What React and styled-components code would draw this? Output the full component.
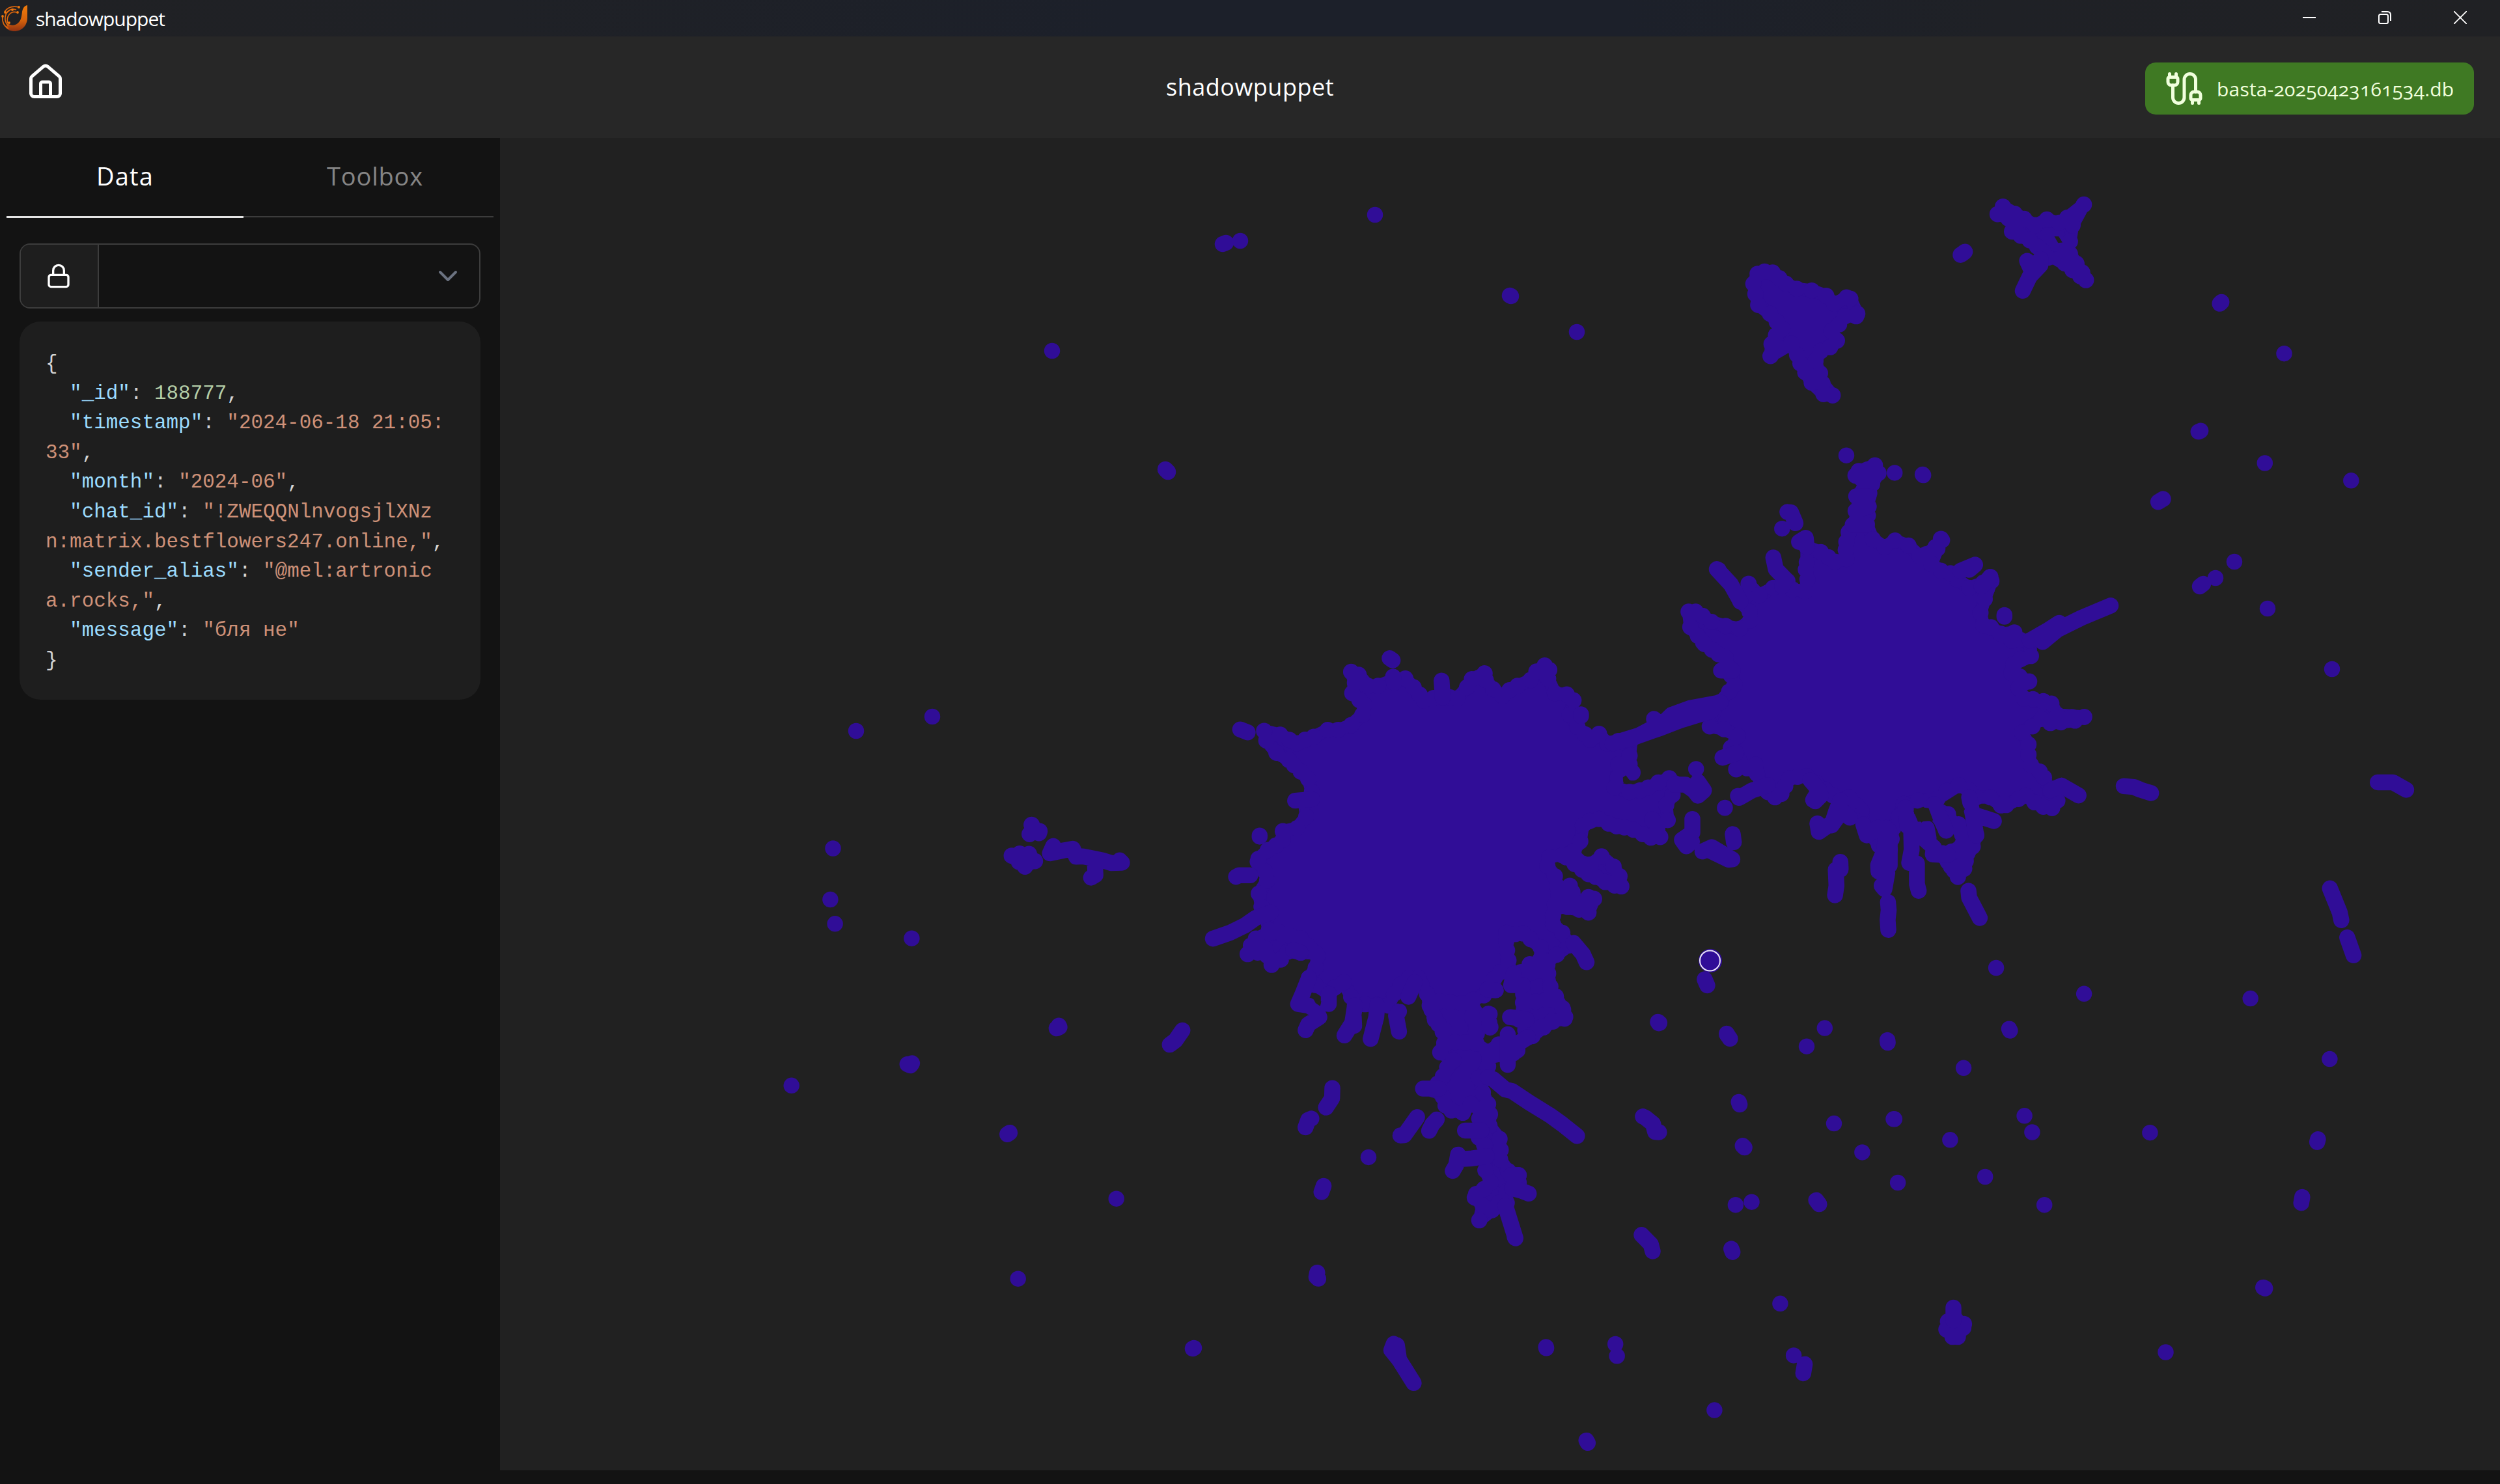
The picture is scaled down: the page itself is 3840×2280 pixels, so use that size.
import React from "react";
import styled, { createGlobalStyle } from "styled-components";
import { Cable, ChevronDown, House, Lock } from "lucide-react";

const GlobalStyle = createGlobalStyle`
  * { box-sizing: border-box; }
  html, body { margin: 0; background: #131313; }
  body { width: 3840px; height: 2280px; overflow: hidden; font-family: "Open Sans", "Noto Sans", sans-serif; color: #fff; }
`;

const Window = styled.div`
  width: 3840px;
  height: 2280px;
  display: flex;
  flex-direction: column;
  background: #131313;
`;
const TitleBar = styled.div`
  height: 56px;
  flex: none;
  display: flex;
  align-items: center;
  justify-content: space-between;
  background: linear-gradient(90deg, #202124 0%, #1f2126 20%, #1c202a 45%, #1c202a 65%, #1f2126 80%, #202124 100%);
`;
const Brand = styled.div`
  display: flex;
  align-items: center;
  gap: 12px;
  padding-left: 1px;
`;
const BrandName = styled.span`
  font-size: 30px;
  line-height: 56px;
  letter-spacing: -1px;
  padding-top: 2px;
`;
const WindowControls = styled.div`
  display: flex;
  height: 56px;
`;
const ControlButton = styled.div`
  width: 116px;
  display: flex;
  align-items: center;
  justify-content: center;
  padding-right: 6px;
  padding-bottom: 2px;
`;
const Header = styled.header`
  height: 156px;
  flex: none;
  display: grid;
  grid-template-columns: 1fr auto 1fr;
  align-items: center;
  padding: 0 40px;
  background: #272727;
`;
const HomeLink = styled.div`
  display: flex;
  padding-bottom: 16px;
`;
const PageTitle = styled.h1`
  margin: 0;
  font-size: 36px;
  font-weight: 400;
  line-height: 48px;
  letter-spacing: 0.5px;
`;
const DatabaseButton = styled.div`
  justify-self: end;
  width: 505px;
  height: 80px;
  margin-top: 4px;
  display: flex;
  align-items: center;
  gap: 20px;
  padding: 0 30px;
  border-radius: 16px;
  background: #3f7923;
  color: #f1ffdd;
  font-size: 30px;
  white-space: nowrap;
  font-feature-settings: "onum" 1;

  svg { flex: none; }
`;
const DatabaseName = styled.span`
  letter-spacing: 0.2px;
`;
const Body = styled.div`
  flex: 1;
  display: flex;
  min-height: 0;
`;
const Sidebar = styled.aside`
  width: 768px;
  flex: none;
  display: flex;
  flex-direction: column;
  padding: 0 10px;
`;
const Tabs = styled.div`
  display: flex;
  height: 123px;
  margin-bottom: 39px;
`;
const Tab = styled.div`
  flex: ${(p) => (p.$active ? "0 0 364px" : "1")};
  height: ${(p) => (p.$active ? 123 : 122)}px;
  padding-bottom: 4px;
  padding-left: ${(p) => (p.$active ? 0 : 20)}px;
  display: flex;
  align-items: center;
  justify-content: center;
  font-size: 38px;
  letter-spacing: ${(p) => (p.$active ? 1.2 : 0.8)}px;
  color: ${(p) => (p.$active ? "#fff" : "#858585")};
  border-bottom: ${(p) => (p.$active ? "3px solid #e4e4e4" : "2px solid #3c3c3c")};
`;
const Picker = styled.div`
  height: 100px;
  margin: 0 20px 20px;
  display: flex;
  border: 2px solid #3d3d3d;
  border-radius: 16px;
  overflow: hidden;
`;
const LockCell = styled.div`
  width: 120px;
  display: flex;
  align-items: center;
  justify-content: center;
  padding-right: 2px;
  background: #1e1e1e;
  border-right: 2px solid #3d3d3d;
`;
const PickerValue = styled.div`
  flex: 1;
  display: flex;
  align-items: center;
  justify-content: flex-end;
  padding-right: 24px;
  color: #6b7280;
`;
const Record = styled.div`
  margin: 0 20px;
  height: 581px;
  padding: 42px 40px 38px;
  border-radius: 32px;
  background: #1e1e1e;
  color: #d4d4d4;
  font-family: "Liberation Mono", monospace;
  font-size: 30.93px;
`;
const CodeLine = styled.div`
  display: flex;
  height: 45.6px;
  line-height: 45.6px;
  padding-left: ${(p) => (p.$indent ? 37.1 : 0)}px;
  white-space: pre;
`;
const Key = styled.span`
  color: #9cdcfe;
`;
const Str = styled.span`
  color: #ce9178;
`;
const Num = styled.span`
  color: #b5cea8;
`;
const MapPanel = styled.main`
  flex: 1;
  height: 2047px;
  background: #212121;
`;

/* Points are stored per tile, on a 1568-unit grid stretched over the tile. */
const GRID = 1568;
const tiles = [
  {
    box: [2550, 260, 1290, 600],
    areas: [
      "195,411 182,420 174,460 183,545 205,580 228,640 208,702 206,750 245,700 262,780 283,857 305,903 322,908 303,860 290,770 300,730 330,688 320,650 345,590 366,590 368,580 355,520 348,515 325,540 310,508 283,487 255,480 235,460 210,415",
      "640,150 630,180 668,210 657,250 690,285 715,330 724,355 745,360 770,405 795,445 788,415 765,340 760,320 765,290 770,225 791,142 760,195 745,215 722,202 700,225",
    ],
    lines: [
      "710,360 710,385 690,430 677,488", "685,368 692,400", "569,331 564,340 561,344", "1048,533 1045,540", "1165,740",
      "1009,1050 1005,1054", "1129,1180", "1290,1250", "939,1324 930,1336",
    ],
    holes: ["736,270 744,270 751,294 743,296"],
  },
  {
    box: [2450, 660, 850, 820],
    areas: [
      "712,330 732,280 745,240 745,196 765,160 738,135 747,122 793,105 803,128 785,160 777,187 775,226 770,278 787,322 820,345 850,326 888,341 920,372 938,366 965,345 980,321 983,325 970,350 953,395 980,415 1007,422 1025,440 1060,465 1100,450 1120,433 1123,445 1104,498 1092,538 1100,575 1122,581 1150,600 1188,596 1180,620 1232,620 1235,665 1185,690 1180,715 1230,740 1200,760 1215,790 1270,798 1293,805 1310,838 1386,844 1360,855 1320,860 1290,862 1265,850 1210,890 1228,925 1228,955 1235,985 1260,1005 1272,1022 1290,1065 1310,1090 1295,1112 1270,1108 1245,1095 1220,1075 1200,1085 1165,1103 1150,1104 1120,1080 1080,1080 1060,1060 1030,1045 970,1085 915,1090 875,1100 845,1170 835,1235 820,1245 765,1165 755,1120 720,1080 695,1090 600,1018 550,1025 528,1070 510,1080 490,1065 470,1045 455,985 400,998 410,975 385,935 405,900 365,880 325,872 335,830 355,800 380,770 395,750 370,670 350,660 310,630 306,625 270,580 265,535 285,535 330,565 370,577 410,585 440,560 438,535 412,505 425,490 435,453 465,487 505,465 545,445 560,470 595,475 602,440 600,390 600,345 640,360 680,388 712,380",
      "965,1110 995,1178 1030,1160 1045,1190 1080,1192 1070,1225 1046,1270 1040,1292 1028,1314 1000,1270 985,1245 1010,1240 1040,1220 1040,1190 1020,1165 1000,1130",
      "1030,1235 1050,1240 1046,1290 1028,1314 990,1255",
    ],
    lines: [
      "355,802 270,818 217,838 195,860 125,898 50,922", "50,922 125,898 185,877 240,855 330,826", "740,196 775,196", "738,239 775,226", "730,280 770,280",
      "712,76", "849,127", "928,132 930,134", "412,505 385,455 345,410 350,412", "505,376 507,385 512,410 540,440 530,460",
      "578,330 597,318 600,345", "545,242 555,243 568,275", "530,291", "1035,415 1077,397 1060,412", "1160,545 1160,550",
      "1120,433 1095,460", "1232,620 1285,588 1315,568 1310,588 1378,553 1461,517", "1268,624 1310,588", "1322,1046 1370,1075", "1290,1060 1322,1046",
      "390,708 357,708", "167,850 180,862", "361,964 400,950", "405,1076 408,1082 445,1060 490,1045", "610,1030 635,1060 618,1088 624,1092 640,1075",
      "695,1090 682,1125 670,1163 700,1120 722,1140", "630,1157 634,1182 660,1163", "760,1160 770,1192 800,1170", "825,1170 820,1235 802,1280 803,1298 828,1302 820,1350 812,1340",
      "835,1180 835,1280", "830,1388 832,1412 829,1440 831,1470", "895,1150 897,1235 890,1273 912,1275 912,1335 917,1355",
      "900,1160 935,1205 960,1228 957,1248 1000,1250", "940,1172 945,1200", "880,1110 885,1165", "960,1100 995,1178", "1060,1080 1070,1130 1130,1150", "1070,1130 1080,1192",
      "695,1270 696,1292 682,1293 684,1340 680,1368", "1058,1355 1060,1375 1090,1435", "368,1111",
    ],
    holes: ["902,1120 925,1110 945,1112 958,1148 940,1150 915,1152", "1032,1110 1040,1102 1048,1115 1044,1122", "735,1108 750,1128 740,1115"],
  },
  {
    box: [1820, 960, 900, 700],
    areas: [
      "212,365 255,378 300,408 345,385 382,362 410,362 445,345 475,310 480,275 448,235 455,200 445,162 465,172 490,210 517,210 557,190 590,185 612,215 640,260 665,252 687,240 710,250 730,252 755,215 768,187 802,167 805,190 825,222 850,245 890,210 925,190 963,140 975,155 972,185 990,235 1022,240 1040,260 1030,310 1050,350 1085,395 1108,375 1130,408 1160,400 1195,395 1190,450 1190,480 1198,508 1160,480 1150,560 1190,575 1240,560 1296,528 1310,545 1305,585 1288,620 1292,672 1250,670 1272,730 1247,732 1225,720 1200,705 1155,693 1108,668 1065,690 1058,745 1040,780 975,800 970,830 990,865 1000,930 985,1000 985,1030 1010,1060 1028,1103 995,1135 970,1160 968,1195 950,1190 900,1195 952,1150 952,1110 905,1062 860,1060 862,1120 870,1190 845,1195 800,1275 770,1290 775,1330 780,1440 700,1440 690,1400 668,1350 655,1310 648,1270 625,1215 600,1215 560,1270 545,1310 455,1310 445,1280 425,1230 385,1270 350,1240 332,1215 350,1180 355,1140 310,1080 225,1050 215,1000 205,970 198,925 220,880 215,850 195,815 197,805 222,775 262,740 262,710 300,700 325,660 320,610 340,575 330,530 310,505 278,465 245,440 218,398",
      "190,1080 225,1060 260,1065 310,1080 350,1130 310,1128 275,1125 232,1170 215,1115 168,1133",
      "1020,800 1050,810 1085,825 1115,797 1147,832 1163,865 1168,900 1125,885 1080,858",
      "1000,910 1030,898 1037,920 1055,960 1080,937 1095,943 1080,990 1055,980 1000,970",
      "970,1170 972,1200 978,1245 988,1290 1012,1325 1016,1355 985,1365 960,1385 930,1415 920,1380 900,1355 905,1300 905,1240 880,1215",
    ],
    lines: [
      "148,360 168,370", "548,115 556,122", "557,178 560,200", "687,192 690,250", "1060,308 1060,314", "1195,390 1250,365", "295,605 340,600",
      "200,725 200,729", "137,867 145,862 175,862", "75,1080 120,1060 160,1035 190,1008 230,990", "1040,1095 1065,1133 1075,1161",
      "1368,496", "1373,540 1389,570 1373,588 1362,570 1340,550 1310,550", "1445,630", "1358,668 1358,715 1330,740 1342,762 1357,745", "1385,780 1410,765 1465,807 1455,808 1410,780", "1466,720 1469,748",
      "1391,1220 1398,1241", "1267,1367 1268,1371", "1450,1407 1458,1424", "832,1258 810,1255", "812,1338 808,1345", "818,1384", "880,1200 873,1240 905,1240",
      "615,1230 598,1280", "573,1330 565,1345 573,1400", "515,1310 512,1350 497,1425", "455,1310 448,1370 427,1413", "452,1350 453,1380",
      "332,1215 315,1270 303,1305 330,1310 350,1325 360,1350 330,1375 323,1395", "385,1270 385,1305", "870,1350 900,1355", "290,1120 310,1128",
    ],
    holes: ["572,1290 582,1305 572,1305", "1172,525 1180,518 1192,538 1182,548 1173,542", "345,1290 365,1296 362,1312 350,1302"],
  },
  {
    box: [1180, 1180, 800, 800],
    areas: ["793,171 787,199 815,196 817,190", "733,264 757,258 785,259 803,280 773,297"],
    lines: [
      "195,242", "187,396", "201,469", "432,513", "70,956", "875,776 877,780 868,784", "433,889 428,896 419,892", "727,1098 720,1103", "1048,1297",
      "752,1538", "1247,790 1226,820 1209,833", "858,235 848,257 890,248 917,243 927,267 947,266 977,272 1010,279 1032,286 1065,285 1058,278", "983,275 985,322 972,330",
    ],
  },
  {
    box: [1900, 1540, 640, 700],
    areas: [
      "728,0 745,60 780,95 780,140 765,172 815,200 775,255 755,280 740,300 775,325 785,355 807,372 850,380 880,350 915,370 912,400 910,465 930,490 940,530 935,578 955,620 900,660 895,672 925,700 912,750 960,715 985,690 1015,690 1015,650 1035,640 1060,620 1060,595 1020,580 990,540 988,470 950,425 952,385 945,350 925,310 910,260 945,220 945,170 895,140 900,100 885,50 880,0",
      "1080,0 1085,95 1095,120 1145,85 1185,65 1232,55 1235,50 1225,20 1200,-20",
      "945,170 985,145 1019,130 1060,140 1055,165 1040,175 1000,180 950,190",
    ],
    lines: [
      "700,297 760,297", "1010,700 1048,812 1045,808", "1035,640 1070,648 1098,658", "951,40", "952,87 950,70", "1019,110 1019,215", "1062,60 1090,60",
      "945,258 965,265 1010,300 1035,305 1100,345 1180,390 1225,420 1280,460", "858,441 920,441", "832,524 825,560 812,580", "832,540 885,537 940,530",
      "1060,595 1030,595", "678,395 630,457 615,458", "752,403 735,420 723,442", "280,400 268,405 258,430", "359,295 358,330 335,362", "495,533", "326,632 318,653",
      "302,930 299,945 306,951", "590,1175 581,1197 610,1230 665,1310", "602,1180 610,1230", "1163,1186 1164,1190", "1424,1176", "1430,1217", "1315,1508 1320,1516",
      "1060,140 1095,120",
    ],
  },
  {
    box: [2480, 1400, 740, 880],
    areas: ["1085,1123 1080,1145 1100,1165 1117,1165 1135,1140 1137,1130 1110,1118"],
    lines: [
      "141,303 146,306", "365,337 376,349", "684,320", "625,370", "888,353 889,360", "1242,155", "1528,226", "1284,322 1287,327", "1136,429", "404,522 407,529",
      "714,581", "908,569 911,569", "1334,560", "1359,605", "1092,626", "806,660", "417,642 423,647", "922,743", "1206,727", "1399,804", "446,796", "394,804", "656,791 666,802",
      "380,924 384,933", "539,1074", "583,1216", "619,1240 614,1265", "325,1366", "1103,1085 1103,1120", "92,562 100,565 125,582 132,604 145,605", "88,886 118,912 124,931",
    ],
  },
  {
    box: [3200, 1150, 640, 1130],
    areas: [],
    lines: [
      "152,80 190,82 215,88 255,95", "1108,72 1165,72 1215,88", "928,298 965,350 971,366", "993,403 1017,441", "629,533", "927,662", "251,819", "883,833 880,839",
      "824,956 820,969", "677,1149 684,1151", "310,1287",
    ],
  },
];
/* Outlying points, already in window coordinates. */
const outliers = [
  [[2112, 330]], [[1878, 375], [1883, 373]], [[1905, 370]], [[2319, 454], [2321, 455]], [[2422, 510]], [[1616, 539]], [[1790, 721], [1794, 725]], [[1315, 1123]], [[1432, 1101]],
  [[3432, 863]], [[3379, 901], [3384, 897]], [[3403, 888]], [[3483, 935]], [[3582, 1028]], [[1832, 2072], [1834, 2071]],
];

const MAP_X = 768;
const MAP_Y = 212;
const place = ([x, y, w, h], text) =>
  text.split(" ").map((pair) => {
    const [px, py] = pair.split(",").map(Number);
    return [x + (px * w) / GRID - MAP_X, y + (py * h) / GRID - MAP_Y];
  });
const toPath = (pts, close) =>
  "M" + pts.map(([x, y]) => x.toFixed(1) + " " + y.toFixed(1)).join("L") + (close ? "Z" : pts.length === 1 ? "h0.01" : "");

/* Single points strung along a cluster's rim, about one radius apart. */
const rim = (pts) => {
  const dots = [];
  pts.forEach(([x1, y1], i) => {
    const [x2, y2] = pts[(i + 1) % pts.length];
    const steps = Math.max(1, Math.round(Math.hypot(x2 - x1, y2 - y1) / 17));
    for (let s = 0; s < steps; s += 1) {
      const wobble = s === 0 ? 0 : Math.sin((i * 7 + s * 5) * 2.3) * 2;
      const t = s / steps;
      dots.push([x1 + (x2 - x1) * t + wobble, y1 + (y2 - y1) * t + wobble]);
    }
  });
  return dots.map((d) => toPath([d])).join("");
};

const areaPoints = tiles.flatMap((t) => t.areas.map((a) => place(t.box, a)));
const linePoints = [
  ...tiles.flatMap((t) => t.lines.map((l) => place(t.box, l))),
  ...outliers.map((o) => o.map(([x, y]) => [x - MAP_X, y - MAP_Y])),
];
const holePoints = tiles.flatMap((t) => (t.holes || []).map((a) => place(t.box, a)));

function PointCloud() {
  return (
    <svg width="3072" height="2047" viewBox="0 0 3072 2047" display="block">
      <g stroke="#300d97" strokeLinecap="round" strokeLinejoin="round">
        {areaPoints.map((pts, i) => (
          <path key={i} d={toPath(pts, true)} fill="#300d97" strokeWidth="20" />
        ))}
        <path d={areaPoints.map(rim).join("")} fill="none" strokeWidth="25" />
        <path d={linePoints.map((pts) => toPath(pts)).join("")} fill="none" strokeWidth="24.5" />
      </g>
      <path d={holePoints.map((pts) => toPath(pts, true)).join("")} fill="#212121" />
      <circle cx="1859" cy="1264" r="18" fill="#300d97" />
      <circle cx="1858.5" cy="1264" r="15.5" fill="none" stroke="#e6dff5" strokeWidth="2" />
    </svg>
  );
}

function Logo() {
  return (
    <svg width="42" height="42" viewBox="0 0 42 42">
      <defs>
        <linearGradient id="ember" x1="0" y1="0" x2="0" y2="1">
          <stop offset="0" stopColor="#f07c0c" />
          <stop offset="0.6" stopColor="#d2600c" />
          <stop offset="1" stopColor="#8e3212" />
        </linearGradient>
      </defs>
      <path d="M41 1C36 2 34 6 33 11C32 20 31 25 26 29C21 33 15 32 11 29C10 33 8 34 7 34C10 39 16 41 21 41C33 41 41 32 41 20Z" fill="url(#ember)" />
      <g fill="none" stroke="#d9650e" strokeWidth="1.7">
        <path d="M3 18C2 26 5 33 12 37" />
        <path d="M6 11C11 4 19 2 28 4" />
        <path d="M14 9C6 13 4 25 12 33" />
        <path d="M25 12C15 9 8 18 11 29" />
        <path d="M8 14C12 8 18 6 24 8" />
      </g>
      <g fill="#ee780e">
        <circle cx="3" cy="18" r="1.9" />
        <circle cx="7" cy="12" r="1.9" />
        <circle cx="28" cy="4" r="1.9" />
        <circle cx="18" cy="8" r="1.9" />
        <circle cx="26" cy="12" r="1.9" />
        <circle cx="13" cy="28" r="1.9" />
      </g>
    </svg>
  );
}

export default function App() {
  return (
    <Window>
      <GlobalStyle />
      <TitleBar>
        <Brand>
          <Logo />
          <BrandName>shadowpuppet</BrandName>
        </Brand>
        <WindowControls>
          <ControlButton>
            <svg width="20" height="20" viewBox="0 0 20 20"><path d="M0 10H20" stroke="#fff" strokeWidth="2" /></svg>
          </ControlButton>
          <ControlButton>
            <svg width="20" height="20" viewBox="0 0 20 20" fill="none" stroke="#fff" strokeWidth="2">
              <rect x="1" y="5" width="14" height="14" rx="2.5" />
              <path d="M5 1H14C17 1 19 3 19 6V15" />
            </svg>
          </ControlButton>
          <ControlButton>
            <svg width="20" height="20" viewBox="0 0 20 20"><path d="M0 0L20 20M20 0L0 20" stroke="#fff" strokeWidth="1.8" /></svg>
          </ControlButton>
        </WindowControls>
      </TitleBar>
      <Header>
        <HomeLink><House size={60} strokeWidth={2} /></HomeLink>
        <PageTitle>shadowpuppet</PageTitle>
        <DatabaseButton>
          <Cable size={60} strokeWidth={2} />
          <DatabaseName>basta-20250423161534.db</DatabaseName>
        </DatabaseButton>
      </Header>
      <Body>
        <Sidebar>
          <Tabs>
            <Tab $active>Data</Tab>
            <Tab>Toolbox</Tab>
          </Tabs>
          <Picker>
            <LockCell><Lock size={40} strokeWidth={2} /></LockCell>
            <PickerValue><ChevronDown size={48} strokeWidth={2} /></PickerValue>
          </Picker>
          <Record>
            <CodeLine>{"{"}</CodeLine>
            <CodeLine $indent><Key>"_id"</Key><span>: </span><Num>188777</Num><span>,</span></CodeLine>
            <CodeLine $indent><Key>"timestamp"</Key><span>: </span><Str>"2024-06-18 21:05:</Str></CodeLine>
            <CodeLine><Str>33"</Str><span>,</span></CodeLine>
            <CodeLine $indent><Key>"month"</Key><span>: </span><Str>"2024-06"</Str><span>,</span></CodeLine>
            <CodeLine $indent><Key>"chat_id"</Key><span>: </span><Str>"!ZWEQQNlnvogsjlXNz</Str></CodeLine>
            <CodeLine><Str>n:matrix.bestflowers247.online,"</Str><span>,</span></CodeLine>
            <CodeLine $indent><Key>"sender_alias"</Key><span>: </span><Str>"@mel:artronic</Str></CodeLine>
            <CodeLine><Str>a.rocks,"</Str><span>,</span></CodeLine>
            <CodeLine $indent><Key>"message"</Key><span>: </span><Str>"бля не"</Str></CodeLine>
            <CodeLine>{"}"}</CodeLine>
          </Record>
        </Sidebar>
        <MapPanel><PointCloud /></MapPanel>
      </Body>
    </Window>
  );
}
